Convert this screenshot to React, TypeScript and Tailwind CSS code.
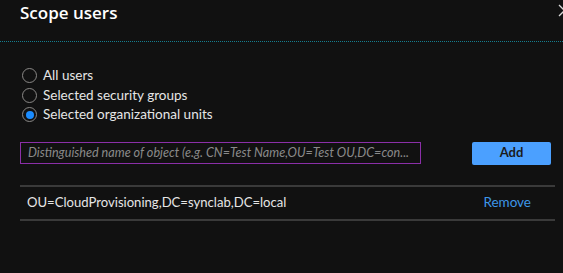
import React, { useState } from 'react';

const options = ['All users', 'Selected security groups', 'Selected organizational units'];

const App: React.FC = () => {
  const [scope, setScope] = useState(2);

  return (
    <div
      className="relative h-[273px] w-[563px] overflow-hidden bg-[#111111] text-[#e6e6e6]"
      style={{ fontFamily: 'Lato, "Open Sans", sans-serif' }}
    >
      <div className="flex h-[41px] items-start justify-between pl-[20px]">
        <h1
          className="mt-[1px] text-[17px] font-semibold leading-[24px] text-white"
          style={{ fontFamily: '"Open Sans", sans-serif' }}
        >
          Scope users
        </h1>
        <svg className="mt-[4px] mr-[-8px] h-[13px] w-[13px] shrink-0" viewBox="0 0 13 13" fill="none" stroke="#d8d8d8" strokeWidth="1.3">
          <path d="M1 1 L12 12 M12 1 L1 12" />
        </svg>
      </div>
      <div className="border-t border-dotted border-[#157d8e]" />

      <div className="pl-[20px] pr-[8px] pt-[24px]">
        <div className="flex flex-col">
          {options.map((option, index) => (
            <label key={option} className="flex h-[19.5px] cursor-pointer items-center gap-[6px] pl-[2px]" onClick={() => setScope(index)}>
              <span className="flex h-[15px] w-[15px] items-center justify-center rounded-full border border-[#8a8886]">
                {scope === index && <span className="h-[8px] w-[8px] rounded-full bg-[#1a8cff]" />}
              </span>
              <span className="text-[13.5px] leading-[19px] text-[#e6e6e6]">{option}</span>
            </label>
          ))}
        </div>

        <div className="mt-[17px] flex items-start">
          <input
            className="h-[22px] w-[401px] shrink-0 border border-[#8b2fa8] bg-transparent pl-[7px] pr-[3px] text-[12.6px] italic text-[#e6e6e6] outline-none placeholder:text-[#8a8a8a]"
            placeholder="Distinguished name of object (e.g. CN=Test Name,OU=Test OU,DC=con..."
          />
          <button className="ml-[51px] h-[23px] w-[79px] shrink-0 rounded-[2px] bg-[#4ba0ff] text-[13px] font-bold text-[#1b1b1b]">
            Add
          </button>
        </div>

        <div className="mt-[20px] flex h-[36px] items-center justify-between border-y-2 border-[#3a3a3a] pl-[7px] pr-[24px]">
          <span className="text-[13.1px] text-[#e6e6e6]">OU=CloudProvisioning,DC=synclab,DC=local</span>
          <button className="text-[13.5px] text-[#3d96e8]">Remove</button>
        </div>
      </div>
    </div>
  );
};

export default App;
